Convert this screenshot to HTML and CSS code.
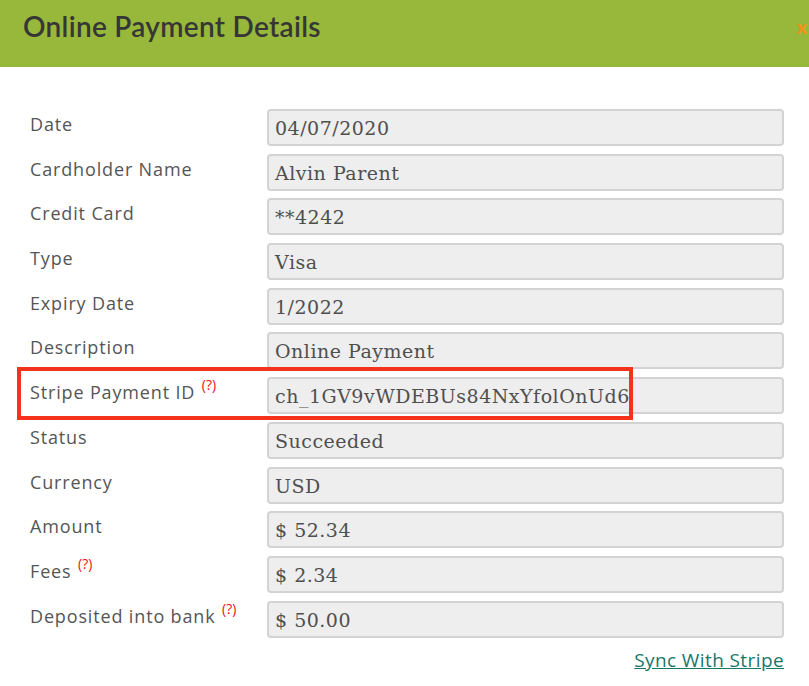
FILE: index.html
```html
<!DOCTYPE html>
<html>
<head>
<meta charset="utf-8">
<link rel="stylesheet" href="styles.css">
</head>
<body>
<div class="modal">
  <div class="modal-header">
    <h1 class="modal-title">Online Payment Details</h1>
    <span class="close">x</span>
  </div>
  <div class="modal-body">
    <div class="row"><label class="lbl">Date</label><div class="field">04/07/2020</div></div>
    <div class="row"><label class="lbl">Cardholder Name</label><div class="field">Alvin Parent</div></div>
    <div class="row"><label class="lbl">Credit Card</label><div class="field">**4242</div></div>
    <div class="row"><label class="lbl">Type</label><div class="field">Visa</div></div>
    <div class="row"><label class="lbl">Expiry Date</label><div class="field">1/2022</div></div>
    <div class="row"><label class="lbl">Description</label><div class="field">Online Payment</div></div>
    <div class="row highlight"><label class="lbl">Stripe Payment ID <sup class="help">(?)</sup></label><div class="field">ch_1GV9vWDEBUs84NxYfolOnUd6</div><div class="redbox"></div></div>
    <div class="row"><label class="lbl">Status</label><div class="field">Succeeded</div></div>
    <div class="row"><label class="lbl">Currency</label><div class="field">USD</div></div>
    <div class="row"><label class="lbl">Amount</label><div class="field">$ 52.34</div></div>
    <div class="row"><label class="lbl">Fees <sup class="help">(?)</sup></label><div class="field">$ 2.34</div></div>
    <div class="row"><label class="lbl">Deposited into bank <sup class="help">(?)</sup></label><div class="field">$ 50.00</div></div>
    <div class="actions"><a class="sync" href="#">Sync With Stripe</a></div>
  </div>
</div>
</body>
</html>
```
FILE: styles.css
```css
html, body {
  margin: 0;
  padding: 0;
  background: #fff;
}
.modal {
  width: 809px;
  height: 686px;
  overflow: hidden;
  font-family: "Open Sans", "Liberation Sans", sans-serif;
}
.modal-header {
  height: 67px;
  background: #97b83a;
  display: flex;
  justify-content: space-between;
  align-items: flex-start;
  box-sizing: border-box;
  padding: 8px 0 0 23px;
}
.modal-title {
  margin: 0;
  font-family: "Lato", "Open Sans", sans-serif;
  font-size: 28px;
  font-weight: 600;
  color: #363636;
  line-height: 36px;
  letter-spacing: 0.3px;
}
.close {
  color: #f39318;
  font-family: "Lato", sans-serif;
  font-size: 19px;
  font-weight: 900;
  line-height: 38px;
  margin-right: 2px;
}
.modal-body {
  padding: 42px 25px 0 30px;
  display: flex;
  flex-direction: column;
  gap: 7.7px;
}
.row {
  display: flex;
  align-items: flex-start;
  position: relative;
}
.lbl {
  width: 237px;
  flex: none;
  font-size: 18px;
  color: #555;
  padding-top: 3px;
  line-height: 24px;
  letter-spacing: 0.85px;
}
.help {
  color: #ee1111;
  font-size: 14px;
  vertical-align: top;
  position: relative;
  top: -7px;
  margin-left: 1px;
  letter-spacing: 0;
}
.field {
  flex: 1;
  height: 37px;
  box-sizing: border-box;
  border: 2px solid #d3d3d3;
  border-radius: 4px;
  background: #eee;
  font-family: "DejaVu Serif", "Liberation Serif", serif;
  font-size: 19px;
  letter-spacing: 0.5px;
  color: #4f4f4f;
  padding: 5px 6px;
  line-height: 24px;
  white-space: nowrap;
}
.redbox {
  position: absolute;
  left: -13px;
  top: -10px;
  width: 616px;
  height: 53px;
  border: 4px solid #f5321b;
  box-sizing: border-box;
  pointer-events: none;
}
.actions {
  display: flex;
  justify-content: flex-end;
  padding-top: 2px;
}
.sync {
  color: #17776b;
  font-size: 19px;
  letter-spacing: 0.4px;
  text-decoration: underline;
}
```
